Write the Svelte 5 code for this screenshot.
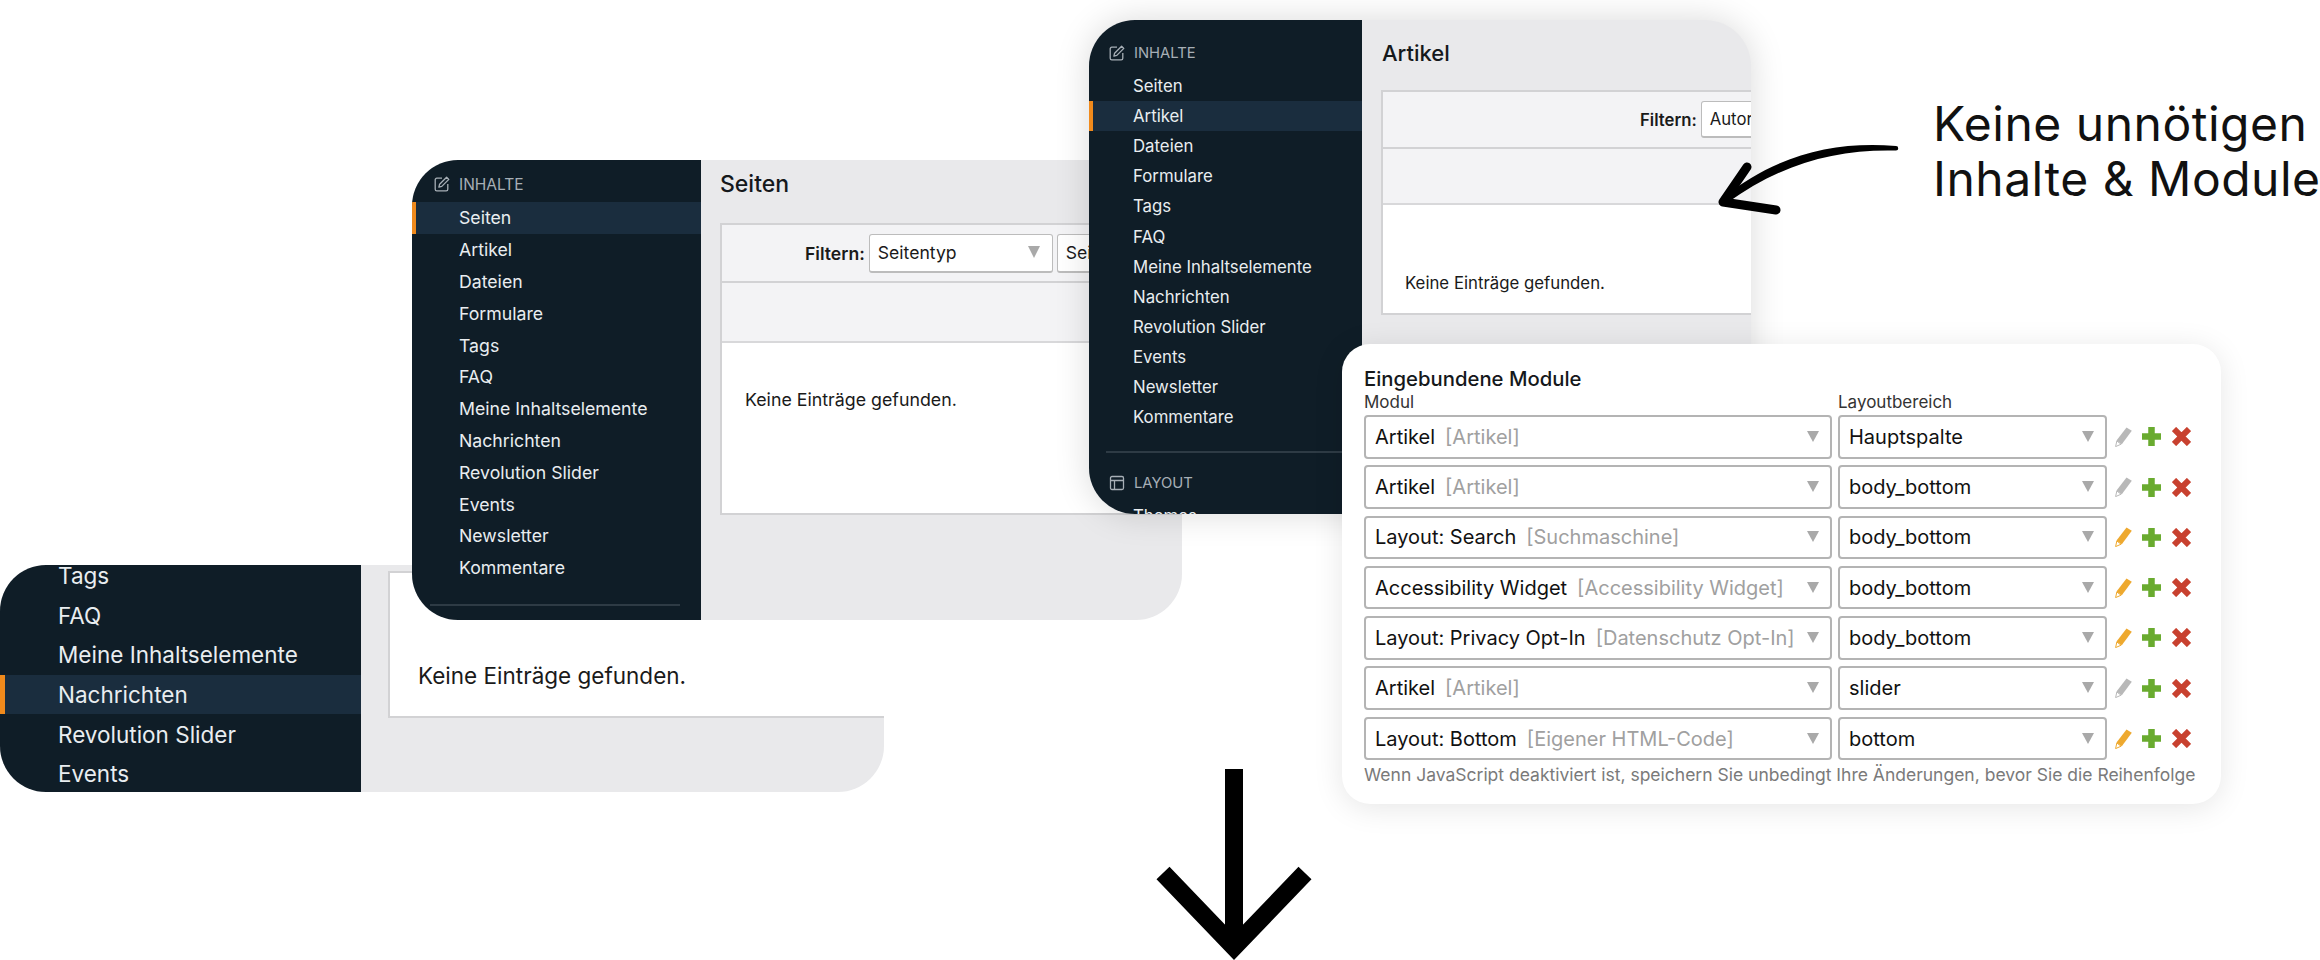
<script>
  const items = ["Seiten", "Artikel", "Dateien", "Formulare", "Tags", "FAQ", "Meine Inhaltselemente", "Nachrichten", "Revolution Slider", "Events", "Newsletter", "Kommentare"];

  const modules = [
    { name: "Artikel", type: "[Artikel]", area: "Hauptspalte", edit: false },
    { name: "Artikel", type: "[Artikel]", area: "body_bottom", edit: false },
    { name: "Layout: Search", type: "[Suchmaschine]", area: "body_bottom", edit: true },
    { name: "Accessibility Widget", type: "[Accessibility Widget]", area: "body_bottom", edit: true },
    { name: "Layout: Privacy Opt-In", type: "[Datenschutz Opt-In]", area: "body_bottom", edit: true },
    { name: "Artikel", type: "[Artikel]", area: "slider", edit: false },
    { name: "Layout: Bottom", type: "[Eigener HTML-Code]", area: "bottom", edit: true }
  ];
</script>

{#snippet navList(list, active)}
  <ul class="nav">
    {#each list as item}
      <li class:active={item === active}>{item}</li>
    {/each}
  </ul>
{/snippet}

{#snippet editIcon()}
  <svg class="head-icon" viewBox="0 0 16 16" fill="none" stroke="currentColor" stroke-width="1.3">
    <path d="M8 2.2H2.8a1.6 1.6 0 0 0-1.6 1.6v9.4a1.6 1.6 0 0 0 1.6 1.6h9.4a1.6 1.6 0 0 0 1.6-1.6V8" />
    <path d="M12.6 1.2l2.2 2.2-7 7-2.9.7.7-2.9z" stroke-linejoin="round" />
  </svg>
{/snippet}

{#snippet layoutIcon()}
  <svg class="head-icon" viewBox="0 0 16 16" fill="none" stroke="currentColor" stroke-width="1.3">
    <rect x="1.5" y="1.5" width="13" height="13" rx="1.5" />
    <path d="M1.5 5.5h13M5.5 5.5v9" />
  </svg>
{/snippet}

{#snippet pencil(on)}
  <svg class="tool" class:on viewBox="0 0 17 20" width="17" height="20">
    <path class="body" d="M11.500 0.500l5.300 3.300L6.800 17.200 1.500 13.400z" />
    <path d="M1.800 14l4.300 3.200L0.600 19.600z" fill="#fff" stroke="currentColor" stroke-width="1" stroke-linejoin="round" />
  </svg>
{/snippet}

<div class="canvas">
  <!-- back window, zoomed in -->
  <section class="win win-a">
    <aside class="side">
      {@render navList(items.slice(4, 10), "Nachrichten")}
    </aside>
    <div class="main">
      <div class="box">
        <div class="body-row"><span>Keine Einträge gefunden.</span></div>
      </div>
    </div>
  </section>

  <section class="win win-b">
    <aside class="side">
      <div class="head">{@render editIcon()}<span>INHALTE</span></div>
      {@render navList(items, "Seiten")}
      <hr />
    </aside>
    <div class="main">
      <h2>Seiten</h2>
      <div class="box">
        <div class="filter">
          <b>Filtern:</b>
          <div class="pick first">Seitentyp<i></i></div>
          <div class="pick">Seite</div>
        </div>
        <div class="blank"></div>
        <div class="body-row"><span>Keine Einträge gefunden.</span></div>
      </div>
    </div>
  </section>

  <section class="win win-c">
    <aside class="side">
      <div class="head">{@render editIcon()}<span>INHALTE</span></div>
      {@render navList(items, "Artikel")}
      <hr />
      <div class="head">{@render layoutIcon()}<span>LAYOUT</span></div>
      {@render navList(["Themes"], "")}
    </aside>
    <div class="main">
      <h2>Artikel</h2>
      <div class="box">
        <div class="filter">
          <b>Filtern:</b>
          <div class="pick">Autor</div>
        </div>
        <div class="blank"></div>
        <div class="body-row"><span>Keine Einträge gefunden.</span></div>
      </div>
    </div>
  </section>

  <section class="card">
    <h3>Eingebundene Module</h3>
    <div class="labels">
      <span>Modul</span>
      <span>Layoutbereich</span>
    </div>
    <div class="rows">
      {#each modules as mod}
        <div class="row">
          <div class="sel"><span>{mod.name}</span><em>{mod.type}</em><i></i></div>
          <div class="sel"><span>{mod.area}</span><i></i></div>
          <div class="tools">
            {@render pencil(mod.edit)}
            <svg viewBox="0 0 19 19" width="19" height="19"><path d="M9.500 0v19M0 9.500h19" stroke="#69ab2f" stroke-width="6.500" /></svg>
            <svg viewBox="0 0 19 19" width="19" height="19"><path d="M2 2l15 15M17 2L2 17" stroke="#c8412f" stroke-width="6" /></svg>
          </div>
        </div>
      {/each}
    </div>
    <p class="note">Wenn JavaScript deaktiviert ist, speichern Sie unbedingt Ihre Änderungen, bevor Sie die Reihenfolge</p>
  </section>

  <svg class="curve" viewBox="0 0 190 78" width="190" height="78">
    <path d="M181 6C118 1 62 15 7 58l5 5C66 24 120 9 181 10.500a2 2 0 0 0 0-4.500z" fill="#000" />
    <path d="M32 27L8 62l53 8" fill="none" stroke="#000" stroke-width="9" stroke-linecap="round" stroke-linejoin="round" />
  </svg>

  <div class="callout">Keine unnötigen<br />Inhalte &amp; Module</div>

  <svg class="down" viewBox="0 0 160 192" width="160" height="192">
    <path d="M80 0v170" stroke="#000" stroke-width="18" fill="none" />
    <path d="M9 104l71 74 71-74" stroke="#000" stroke-width="18" fill="none" stroke-miterlimit="8" />
  </svg>
</div>

<style>
  :global(body) {
    margin: 0;
    background: #fff;
    overflow: hidden;
  }

  .canvas {
    position: relative;
    width: 2320px;
    height: 960px;
    overflow: hidden;
    font-family: Inter, "Liberation Sans", sans-serif;
    color: #1a1a1a;
  }

  .win {
    position: absolute;
    display: flex;
    overflow: hidden;
    background: #e9e9eb;
  }

  .side {
    flex: none;
    background: #0f1d27;
    color: #e9edf0;
    overflow: hidden;
  }

  .main {
    flex: 1;
    min-width: 0;
    overflow: hidden;
  }

  .nav {
    list-style: none;
    margin: 0;
    padding: 0;
  }

  .nav li {
    display: flex;
    align-items: center;
    white-space: nowrap;
    border-left: 4px solid transparent;
  }

  .nav li.active {
    background: #1a2d3e;
    border-left-color: #f08a1c;
  }

  .head {
    display: flex;
    align-items: center;
    height: 36px;
    color: #a7afb6;
  }

  .head-icon {
    width: 16px;
    height: 16px;
    flex: none;
  }

  hr {
    border: 0;
    height: 2px;
    background: #2e3b45;
  }

  h2 {
    margin: 0;
    font-weight: 500;
    color: #15181b;
  }

  .box {
    display: flex;
    flex-direction: column;
    border: 2px solid #d2d2d4;
    border-right: 0;
    background: #fff;
    box-sizing: border-box;
  }

  .filter {
    display: flex;
    align-items: center;
    gap: 4px;
    flex: none;
    box-sizing: border-box;
    background: #f3f3f5;
    border-bottom: 2px solid #d2d2d4;
    white-space: nowrap;
  }

  .filter b {
    font-weight: 600;
  }

  .blank {
    flex: none;
    background: #f3f3f5;
    border-bottom: 2px solid #d8d8da;
    box-sizing: border-box;
  }

  .body-row {
    flex: 1;
    display: flex;
    background: #fff;
  }

  .pick {
    position: relative;
    flex: none;
    width: 184px;
    box-sizing: border-box;
    display: flex;
    align-items: center;
    background: #fff;
    border: 1px solid #bcbcbc;
    border-bottom-width: 2px;
    border-radius: 3px;
    padding-left: 8px;
  }

  .pick i,
  .sel i {
    position: absolute;
    top: 50%;
    width: 0;
    height: 0;
    border-style: solid;
    border-color: #a9a9a9 transparent transparent;
  }

  .pick i {
    right: 12px;
    margin-top: -7px;
    border-width: 12px 6px 0;
  }

  /* back window */
  .win-a {
    left: 0;
    top: 565px;
    width: 884px;
    height: 227px;
    border-radius: 46px 0 46px 46px;
  }

  .win-a .side {
    width: 361px;
  }

  .win-a .nav {
    margin-top: -9px;
    font-size: 22.500px;
  }

  .win-a .nav li {
    height: 39.600px;
    padding-left: 53px;
    border-left-width: 5px;
  }

  .win-a .main {
    padding: 6px 0 0 27px;
  }

  .win-a .box {
    width: 540px;
    height: 147px;
    justify-content: flex-end;
    border-left-width: 2px;
  }

  .win-a .body-row {
    align-items: flex-end;
    padding: 0 0 27px 28px;
    font-size: 22.500px;
  }

  /* middle window */
  .win-b {
    left: 412px;
    top: 160px;
    width: 770px;
    height: 460px;
    border-radius: 46px;
  }

  .win-b .side {
    width: 289px;
  }

  .win-b .head {
    margin-top: 6px;
    padding-left: 22px;
    gap: 9px;
    font-size: 15.500px;
  }

  .win-b .nav {
    font-size: 17.700px;
  }

  .win-b .nav li {
    height: 31.800px;
    padding-left: 43px;
  }

  .win-b hr {
    margin: 20px 0 0 18px;
    width: 250px;
  }

  .win-b .main {
    padding-left: 19px;
  }

  .win-b h2 {
    height: 63px;
    line-height: 49px;
    font-size: 23px;
  }

  .win-b .box {
    width: 480px;
    height: 292px;
  }

  .win-b .filter {
    height: 58px;
    padding-left: 83px;
    font-size: 17.600px;
  }

  .win-b .pick {
    height: 39px;
    font-size: 17.600px;
  }

  .win-b .blank {
    height: 60px;
  }

  .win-b .body-row {
    padding: 46px 0 0 23px;
    font-size: 17.800px;
  }

  /* front window */
  .win-c {
    left: 1089px;
    top: 20px;
    width: 662px;
    height: 494px;
    border-radius: 46px;
    box-shadow: 0 0 34px rgba(0, 0, 0, 0.15);
  }

  .win-c .side {
    width: 273px;
  }

  .win-c .head {
    padding-left: 20px;
    gap: 9px;
    font-size: 14.800px;
  }

  .win-c .head:first-child {
    margin-top: 15px;
  }

  .win-c hr + .head {
    margin-top: 12px;
  }

  .win-c .nav {
    font-size: 16.800px;
  }

  .win-c .nav li {
    height: 30.100px;
    padding-left: 40px;
  }

  .win-c hr {
    margin: 19px 0 0 17px;
    width: 256px;
  }

  .win-c .main {
    padding-left: 20px;
  }

  .win-c h2 {
    height: 70px;
    line-height: 66px;
    font-size: 22px;
  }

  .win-c .box {
    width: 480px;
    height: 225px;
    margin-left: -1px;
  }

  .win-c .filter {
    height: 57px;
    padding-left: 257px;
    font-size: 16.700px;
  }

  .win-c .pick {
    height: 37px;
    font-size: 16.700px;
  }

  .win-c .blank {
    height: 56px;
  }

  .win-c .body-row {
    align-items: flex-end;
    padding: 0 0 20px 22px;
    font-size: 16.800px;
  }

  /* module card */
  .card {
    position: absolute;
    left: 1342px;
    top: 344px;
    width: 879px;
    height: 460px;
    box-sizing: border-box;
    padding: 22px 0 0 22px;
    background: #fff;
    border-radius: 28px;
    box-shadow: 0 4px 30px rgba(0, 0, 0, 0.1);
    white-space: nowrap;
  }

  h3 {
    margin: 0;
    height: 24px;
    line-height: 25px;
    font-size: 20.300px;
    font-weight: 500;
    color: #15181b;
  }

  .labels {
    display: grid;
    grid-template-columns: 474px 1fr;
    height: 25px;
    line-height: 24px;
    font-size: 17px;
    color: #333;
  }

  .rows {
    display: flex;
    flex-direction: column;
    gap: 6.800px;
  }

  .row {
    display: flex;
    align-items: center;
    gap: 6px;
    height: 43.500px;
  }

  .sel {
    position: relative;
    height: 100%;
    box-sizing: border-box;
    display: flex;
    align-items: center;
    gap: 10px;
    padding-left: 9px;
    border: 2px solid #b4b4b4;
    border-radius: 4px;
    font-size: 20px;
    color: #111;
  }

  .sel:nth-child(1) {
    width: 468px;
  }

  .sel:nth-child(2) {
    width: 269px;
  }

  .sel em {
    font-style: normal;
    color: #a0a0a0;
  }

  .sel i {
    right: 11px;
    margin-top: -6px;
    border-width: 11px 6px 0;
  }

  .tools {
    display: flex;
    align-items: center;
    gap: 11px;
    margin-left: 2px;
  }

  .tools svg {
    flex: none;
  }

  .tool {
    color: #b8b8b8;
    margin-right: -1px;
  }

  .tool .body {
    fill: #b8b8b8;
  }

  .tool.on {
    color: #eea92f;
  }

  .tool.on .body {
    fill: #eea92f;
  }

  .note {
    margin: 3px 0 0;
    height: 24px;
    line-height: 24px;
    font-size: 17.500px;
    color: #7a7a7a;
  }

  .curve {
    position: absolute;
    left: 1715px;
    top: 140px;
  }

  .callout {
    position: absolute;
    left: 1933px;
    top: 96px;
    font-size: 48px;
    letter-spacing: 0.500px;
    line-height: 55px;
    color: #111;
    white-space: nowrap;
  }

  .down {
    position: absolute;
    left: 1154px;
    top: 769px;
  }
</style>
